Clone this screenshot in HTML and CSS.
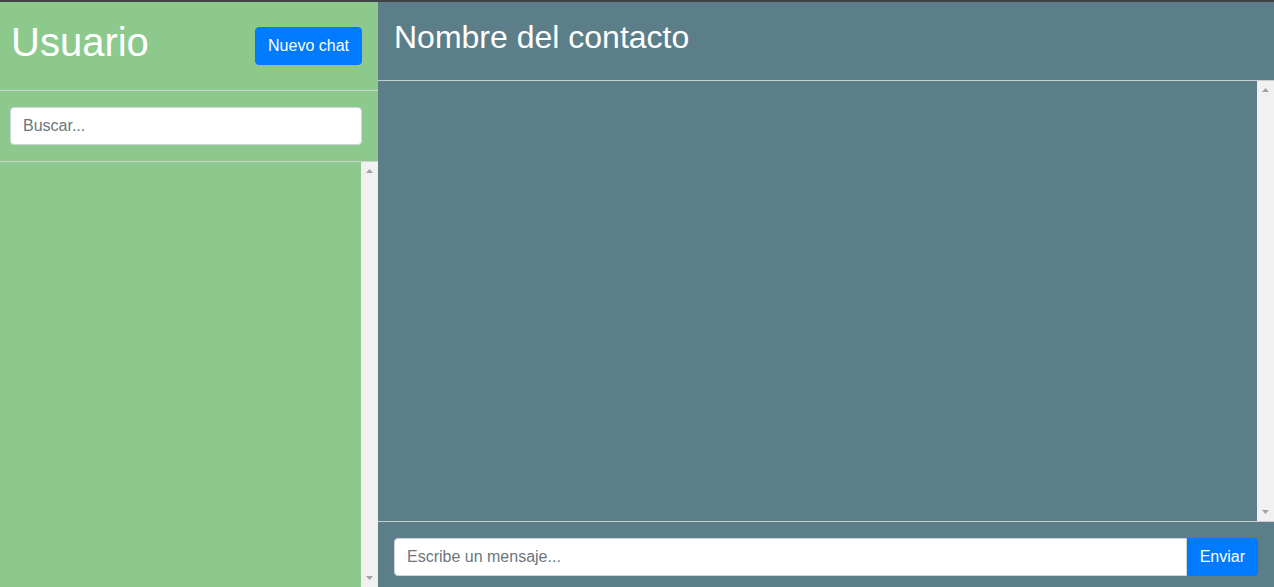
FILE: index.html
```html
<!DOCTYPE html>
<html lang="es">
<head>
<meta charset="utf-8">
<title>Chat</title>
<link rel="stylesheet" href="styles.css">
</head>
<body>
<div class="app">
  <aside class="sidebar">
    <div class="sidebar-header">
      <h1 class="user-name">Usuario</h1>
      <button class="btn btn-primary" type="button">Nuevo chat</button>
    </div>
    <div class="search-box">
      <input class="form-control" type="text" placeholder="Buscar...">
    </div>
    <div class="scroll-pane">
      <div class="chat-list"></div>
      <div class="scrollbar" aria-hidden="true">
        <span class="sb-btn"><svg width="17" height="17" viewBox="0 0 17 17"><path d="M5 11h7L8.5 7z" fill="#a3a3a3"/></svg></span>
        <span class="sb-track"></span>
        <span class="sb-btn"><svg width="17" height="17" viewBox="0 0 17 17"><path d="M5 6h7L8.5 10z" fill="#a3a3a3"/></svg></span>
      </div>
    </div>
  </aside>
  <main class="chat">
    <div class="chat-header">
      <h2 class="contact-name">Nombre del contacto</h2>
    </div>
    <div class="scroll-pane messages-pane">
      <div class="messages"></div>
      <div class="scrollbar" aria-hidden="true">
        <span class="sb-btn"><svg width="17" height="17" viewBox="0 0 17 17"><path d="M5 11h7L8.5 7z" fill="#a3a3a3"/></svg></span>
        <span class="sb-track"></span>
        <span class="sb-btn"><svg width="17" height="17" viewBox="0 0 17 17"><path d="M5 6h7L8.5 10z" fill="#a3a3a3"/></svg></span>
      </div>
    </div>
    <div class="chat-footer">
      <div class="input-group">
        <input class="form-control group-input" type="text" placeholder="Escribe un mensaje...">
        <button class="btn btn-primary group-btn" type="button">Enviar</button>
      </div>
    </div>
  </main>
</div>
</body>
</html>
```

FILE: styles.css
```css
* { box-sizing: border-box; }

html, body {
  margin: 0;
  padding: 0;
  height: 100%;
  overflow: hidden;
}

body {
  font-family: "Liberation Sans", Arial, sans-serif;
  font-size: 16px;
  line-height: 1.5;
  color: #212529;
  border-top: 2px solid #3f4346;
}

.app {
  display: grid;
  grid-template-columns: 378px 1fr;
  height: 585px;
}

.sidebar {
  background: #8dc98c;
  display: flex;
  flex-direction: column;
  min-height: 0;
}

.sidebar-header {
  height: 89px;
  display: flex;
  align-items: center;
  justify-content: space-between;
  padding: 0 16px 0 11px;
  border-bottom: 1px solid #cfd3cf;
}

.user-name {
  margin: 0 0 8px;
  font-size: 40px;
  font-weight: 400;
  line-height: 1.2;
  color: #fff;
}

.btn {
  font-family: inherit;
  font-size: 16px;
  line-height: 1.5;
  padding: 6px 12px;
  border: 1px solid transparent;
  border-radius: 4px;
  cursor: pointer;
}

.btn-primary {
  background: #007bff;
  border-color: #007bff;
  color: #fff;
}

.search-box {
  padding: 16px 16px 16px 10px;
  border-bottom: 1px solid #cfd3cf;
}

.form-control {
  display: block;
  width: 100%;
  height: 38px;
  padding: 6px 12px;
  font-family: inherit;
  font-size: 16px;
  line-height: 1.5;
  color: #495057;
  background: #fff;
  border: 1px solid #ced4da;
  border-radius: 4px;
  outline: none;
}

.form-control::placeholder {
  color: #6c757d;
  opacity: 1;
}

.scroll-pane {
  flex: 1;
  min-height: 0;
  display: flex;
}

.chat-list,
.messages {
  flex: 1;
  min-width: 0;
  overflow: hidden;
}

.scrollbar {
  width: 17px;
  flex: none;
  display: flex;
  flex-direction: column;
  background: #f1f1f1;
}

.sb-btn {
  display: block;
  width: 17px;
  height: 17px;
  flex: none;
}

.sb-btn svg {
  display: block;
}

.sb-track {
  flex: 1;
}

.chat {
  background: #5b7e89;
  display: flex;
  flex-direction: column;
  min-height: 0;
}

.chat-header {
  padding: 16px 16px 0 16px;
  height: 79px;
  border-bottom: 1px solid #c9cfd1;
}

.contact-name {
  margin: 0;
  font-size: 32px;
  font-weight: 400;
  line-height: 1.2;
  color: #fff;
}

.messages-pane {
  border-bottom: 1px solid #c9cfd1;
}

.chat-footer {
  padding: 16px 16px 11px;
}

.input-group {
  display: flex;
}

.group-input {
  flex: 1;
  border-top-right-radius: 0;
  border-bottom-right-radius: 0;
}

.group-btn {
  border-top-left-radius: 0;
  border-bottom-left-radius: 0;
}
```
